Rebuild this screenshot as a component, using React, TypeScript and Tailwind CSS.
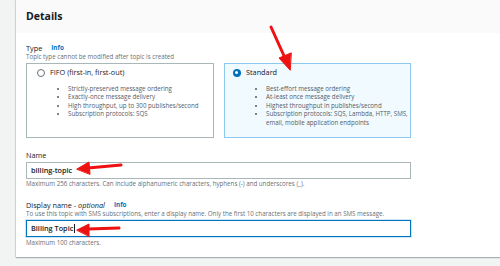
import React from 'react';

const font = { fontFamily: '"Open Sans", "Noto Sans", Arial, sans-serif' };

const Bullets: React.FC<{ items: React.ReactNode[] }> = ({ items }) => (
  <ul className="mt-[7px] ml-[35px] list-disc pl-[6px] text-[6.2px] leading-[8.4px] whitespace-nowrap text-[#545b64] marker:text-[#545b64]">
    {items.map((t, i) => (
      <li key={i}>{t}</li>
    ))}
  </ul>
);

export default function App() {
  return (
    <div style={font} className="relative w-[500px] h-[266px] overflow-hidden bg-[#f2f3f3] pl-[16px]">
      <div className="h-[257px] bg-white shadow-[0_1px_1px_rgba(0,28,36,0.3),-1px_0_1px_rgba(0,28,36,0.1)]">
        <div className="flex h-[33px] items-center bg-[#fafafa] px-[10px] pt-[1px] text-[10.5px] font-bold text-[#16191f]">
          Details
        </div>
        <div className="w-[405px] px-[10px] pt-[10px]">
          <div className="flex items-center gap-[9px] text-[7.3px] leading-[10px] text-[#16191f]">
            <span>Type</span>
            <span className="text-[6.3px] font-bold text-[#0073bb]">Info</span>
          </div>
          <div className="text-[6.2px] leading-[8px] text-[#687078]">
            Topic type cannot be modified after topic is created
          </div>
          <div className="mt-[2px] flex gap-[10px]">
            <div className="h-[75px] w-[193px] border border-[#aab7b8] bg-white">
              <div className="flex items-center gap-[5px] pl-[10px] pt-[3px] text-[7.3px] leading-[11px] text-[#16191f]">
                <span className="h-[8px] w-[8px] rounded-full border border-[#687078] bg-white" />
                FIFO (first-in, first-out)
              </div>
              <Bullets
                items={[
                  'Strictly-preserved message ordering',
                  'Exactly-once message delivery',
                  'High throughput, up to 300 publishes/second',
                  'Subscription protocols: SQS',
                ]}
              />
            </div>
            <div className="h-[75px] w-[192px] border border-[#8cc9ec] bg-[#f1faff]">
              <div className="flex items-center gap-[5px] pl-[8px] pt-[3px] text-[7.3px] leading-[11px] text-[#16191f]">
                <span className="flex h-[8px] w-[8px] items-center justify-center rounded-full bg-[#0073bb]">
                  <span className="h-[3px] w-[3px] rounded-full bg-white" />
                </span>
                Standard
              </div>
              <Bullets
                items={[
                  'Best-effort message ordering',
                  'At-least once message delivery',
                  'Highest throughput in publishes/second',
                  <>
                    Subscription protocols: SQS, Lambda, HTTP, SMS,
                    <br />
                    email, mobile application endpoints
                  </>,
                ]}
              />
            </div>
          </div>

          <div className="mt-[12px] text-[7.3px] leading-[10px] text-[#16191f]">Name</div>
          <div className="mt-[2px] flex h-[17px] items-center border border-[#aab7b8] px-[4px] text-[7.3px] font-semibold text-[#16191f]">
            billing-topic
          </div>
          <div className="mt-[1px] text-[6.2px] leading-[8px] text-[#687078]">
            Maximum 256 characters. Can include alphanumeric characters, hyphens (-) and underscores (_).
          </div>

          <div className="mt-[12px] flex items-center gap-[9px] text-[7.3px] leading-[10px] text-[#16191f]">
            <span>
              Display name - <i>optional</i>
            </span>
            <span className="text-[6.3px] font-bold text-[#0073bb]">Info</span>
          </div>
          <div className="text-[6.2px] leading-[8px] text-[#687078]">
            To use this topic with SMS subscriptions, enter a display name. Only the first 10 characters are displayed in an SMS message.
          </div>
          <div className="mt-[2px] flex h-[17px] items-center border border-[#0073bb] px-[4px] text-[7.3px] font-semibold text-[#16191f] shadow-[0_0_0_1px_#cfe6f6]">
            Billing Topic<span className="ml-[0.5px] inline-block h-[9px] w-[1px] bg-[#16191f]" />
          </div>
          <div className="mt-[2px] text-[6.2px] leading-[8px] text-[#687078]">Maximum 100 characters.</div>
        </div>
      </div>

      <svg className="pointer-events-none absolute left-0 top-0" width="500" height="266" viewBox="0 0 500 266">
        <g stroke="#ee1111" strokeWidth="3" strokeLinecap="round" fill="#ee1111">
          <line x1="271" y1="27" x2="285" y2="58" />
          <polygon points="290,70 279,58 291,53" strokeWidth="1" />
          <line x1="121" y1="165" x2="88" y2="168" />
          <polygon points="77,169 89,162 90,174" strokeWidth="1" />
          <line x1="119" y1="228" x2="88" y2="229" />
          <polygon points="77,230 89,224 89,236" strokeWidth="1" />
        </g>
      </svg>
    </div>
  );
}
